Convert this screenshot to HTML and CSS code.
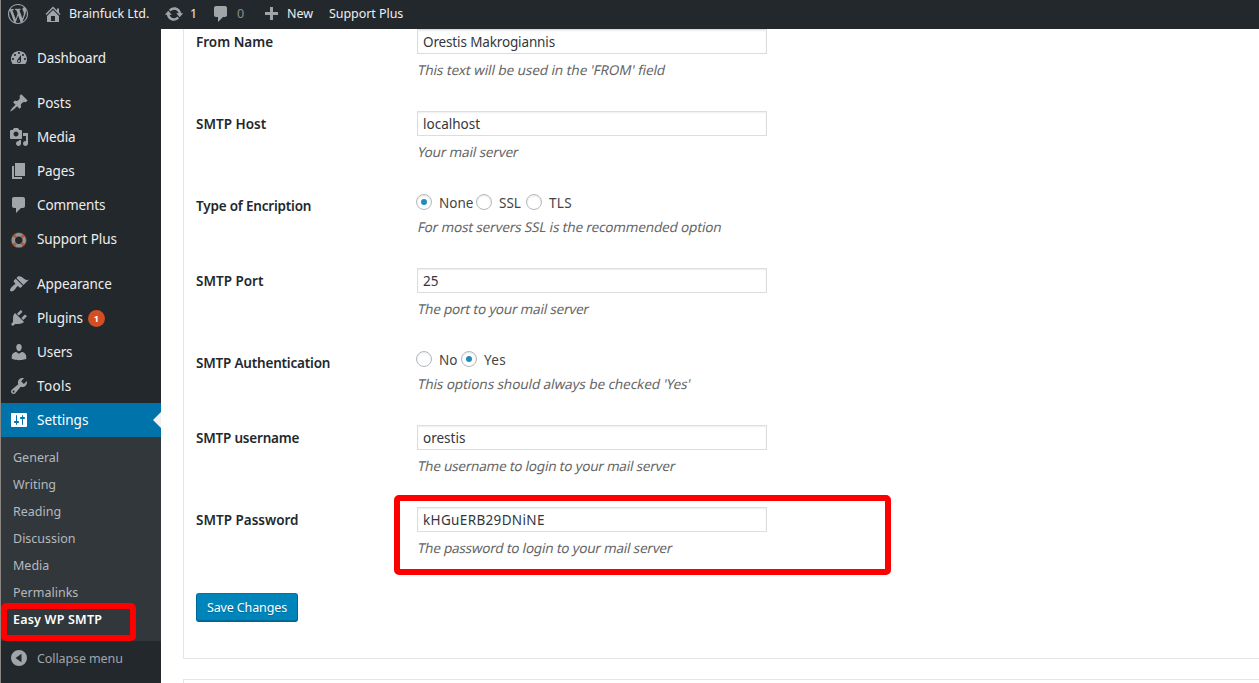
FILE: index.html
```
<!DOCTYPE html>
<html lang="en">
<head>
<meta charset="utf-8">
<title>Easy WP SMTP Settings</title>
<link rel="stylesheet" href="styles.css">
</head>
<body>
<header class="adminbar">
  <a class="bar-item bar-logo"><svg class="icon" viewBox="0 0 20 20"><path d="M20 10c0-5.51-4.49-10-10-10C4.48 0 0 4.49 0 10c0 5.52 4.48 10 10 10 5.51 0 10-4.48 10-10zM7.78 15.37L4.37 6.22c.55-.02 1.17-.08 1.17-.08.5-.06.44-1.13-.06-1.11 0 0-1.45.11-2.37.11-.18 0-.37 0-.58-.01C4.12 2.69 6.87 1.11 10 1.11c2.33 0 4.45.87 6.05 2.34-.68-.11-1.65.39-1.65 1.58 0 .74.45 1.36.9 2.1.35.61.55 1.36.55 2.46 0 1.49-1.4 5-1.4 5l-3.03-8.37c.54-.02.82-.17.82-.17.5-.05.44-1.25-.06-1.22 0 0-1.44.12-2.38.12-.87 0-2.33-.12-2.33-.12-.5-.03-.56 1.2-.06 1.22l.92.08 1.26 3.41zM17.41 10c.24-.64.74-1.87.43-4.25.7 1.29 1.05 2.71 1.05 4.25 0 3.29-1.73 6.24-4.4 7.78.97-2.59 1.94-5.2 2.92-7.78zM6.1 18.09C3.12 16.65 1.11 13.53 1.11 10c0-1.3.23-2.48.72-3.59C3.25 10.3 4.67 14.2 6.1 18.09zm4.03-6.63l2.58 6.98c-.86.29-1.76.45-2.71.45-.79 0-1.57-.11-2.29-.33.81-2.38 1.62-4.74 2.42-7.1z"/></svg></a>
  <a class="bar-item bar-site"><svg class="icon" viewBox="0 0 20 20"><path d="M16 8.5l1.53 1.53-1.06 1.06L10 4.6l-6.47 6.49-1.06-1.06L10 2.5l4 4v-2h2v4zm-6-2.46l6 5.99V18H4v-5.97zM12 17v-5H8v5h4z"/></svg><span>Brainfuck Ltd.</span></a>
  <a class="bar-item bar-updates"><svg class="icon" viewBox="0 0 20 20"><path d="M10.2 3.28c3.53 0 6.43 2.61 6.92 6h2.08l-3.5 4-3.5-4h2.32c-.45-1.97-2.21-3.45-4.32-3.45-1.45 0-2.73.71-3.54 1.78L4.95 5.66C6.23 4.2 8.11 3.28 10.2 3.28zm-.4 13.44c-3.52 0-6.43-2.61-6.92-6H.8l3.5-4c1.17 1.33 2.33 2.67 3.5 4H5.48c.45 1.97 2.21 3.45 4.32 3.45 1.45 0 2.73-.71 3.54-1.78l1.71 1.95c-1.28 1.46-3.15 2.38-5.25 2.38z"/></svg><span>1</span></a>
  <a class="bar-item bar-comments"><svg class="icon" viewBox="0 0 20 20"><path d="M5 2h9c1.1 0 2 .9 2 2v7c0 1.1-.9 2-2 2h-2l-5 5v-5H5c-1.1 0-2-.9-2-2V4c0-1.1.9-2 2-2z"/></svg><span>0</span></a>
  <a class="bar-item bar-new"><svg class="icon" viewBox="0 0 20 20"><path d="M17 8v3h-5v5H9v-5H4V8h5V3h3v5h5z"/></svg><span>New</span></a>
  <a class="bar-item bar-support"><span>Support Plus</span></a>
</header>
<div class="layout">
  <nav class="menu">
    <a class="menu-item"><svg class="icon" viewBox="0 0 20 20"><path d="M3.76 16h12.48c1.1-1.37 1.76-3.11 1.76-5 0-4.42-3.58-8-8-8s-8 3.58-8 8c0 1.89.66 3.63 1.76 5zM10 4c.55 0 1 .45 1 1s-.45 1-1 1-1-.45-1-1 .45-1 1-1zM6 6c.55 0 1 .45 1 1s-.45 1-1 1-1-.45-1-1 .45-1 1-1zm8 0c.55 0 1 .45 1 1s-.45 1-1 1-1-.45-1-1 .45-1 1-1zm-5.37 5.55L12 7v6c0 1.1-.9 2-2 2s-2-.9-2-2c0-.57.24-1.08.63-1.45zM4 10c.55 0 1 .45 1 1s-.45 1-1 1-1-.45-1-1 .45-1 1-1zm12 0c.55 0 1 .45 1 1s-.45 1-1 1-1-.45-1-1 .45-1 1-1zm-5 3c0-.55-.45-1-1-1s-1 .45-1 1 .45 1 1 1 1-.45 1-1z"/></svg><span>Dashboard</span></a>
    <div class="separator"></div>
    <a class="menu-item"><svg class="icon" viewBox="0 0 20 20"><path d="M10.44 3.02l1.82-1.82 6.36 6.35-1.83 1.82c-1.05-.68-2.48-.57-3.41.36l-.75.75c-.92.93-1.04 2.35-.35 3.41l-1.83 1.82-2.41-2.41-2.8 2.79c-.42.42-3.38 2.71-3.8 2.29s1.86-3.39 2.28-3.81l2.79-2.79L4.1 9.36l1.83-1.82c1.05.69 2.48.57 3.4-.36l.75-.75c.93-.92 1.05-2.35.36-3.41z"/></svg><span class="normal">Posts</span></a>
    <a class="menu-item"><svg class="icon" viewBox="0 0 20 20"><path d="M13 11V4c0-.55-.45-1-1-1h-1.67L9 1H5L3.67 3H2c-.55 0-1 .45-1 1v7c0 .55.45 1 1 1h10c.55 0 1-.45 1-1zM7 4.5c1.38 0 2.5 1.12 2.5 2.5S8.38 9.5 7 9.5 4.5 8.38 4.5 7 5.62 4.5 7 4.5zM14 6h5v10.5c0 1.38-1.12 2.5-2.5 2.5S14 17.88 14 16.5s1.12-2.5 2.5-2.5c.17 0 .34.02.5.05V9h-3V6zm-4 8.05V13h2v3.5c0 1.38-1.12 2.5-2.5 2.5S7 17.88 7 16.5 8.12 14 9.5 14c.17 0 .34.02.5.05z"/></svg><span class="tight">Media</span></a>
    <a class="menu-item"><svg class="icon" viewBox="0 0 20 20"><path d="M6 15V2h10v13H6zm-1 1h8v2H3V5h2v11z"/></svg><span>Pages</span></a>
    <a class="menu-item"><svg class="icon" viewBox="0 0 20 20"><path d="M5 2h9c1.1 0 2 .9 2 2v7c0 1.1-.9 2-2 2h-2l-5 5v-5H5c-1.1 0-2-.9-2-2V4c0-1.1.9-2 2-2z"/></svg><span>Comments</span></a>
    <a class="menu-item"><svg class="icon" viewBox="0 0 20 20"><g fill="none" stroke-width="3.8"><circle class="buoy-ring" cx="9.8" cy="11.2" r="5.6"/><circle class="buoy-bands" cx="9.8" cy="11.2" r="5.6" pathLength="80" stroke-dasharray="6 14" stroke-dashoffset="-7"/></g><circle class="buoy-edge" cx="9.8" cy="11.2" r="7.6"/></svg><span>Support Plus</span></a>
    <div class="separator"></div>
    <a class="menu-item"><svg class="icon" viewBox="0 0 20 20"><path d="M14.48 11.06L7.41 3.99l1.5-1.5c.5-.56 2.3-.47 3.51.32 1.21.8 1.43 1.28 2.91 2.1 1.18.64 2.45 1.26 4.45.85zm-.71.71L6.7 4.7 4.93 6.47c-.39.39-.39 1.02 0 1.41l1.06 1.06c.39.39.39 1.03 0 1.42-.6.6-1.43 1.11-2.21 1.69-.35.26-.7.53-1.01.84C1.43 14.23.4 16.08 1.4 17.07c.99 1 2.84-.03 4.18-1.36.31-.31.58-.66.85-1.02.57-.78 1.08-1.61 1.69-2.21.39-.39 1.02-.39 1.41 0l1.06 1.06c.39.39 1.02.39 1.41 0z"/></svg><span>Appearance</span></a>
    <a class="menu-item"><svg class="icon" viewBox="0 0 20 20"><path d="M13.11 4.36L9.87 7.6 8 5.73l3.24-3.24c.35-.34 1.05-.2 1.56.32.52.51.66 1.21.31 1.55zm-8 1.77l.91-1.12 9.01 9.01-1.19.84c-.71.71-2.63 1.16-3.82 1.16H6.14L4.9 17.26c-.59.59-1.54.59-2.12 0-.59-.58-.59-1.53 0-2.12l1.24-1.24v-3.88c0-1.13.4-3.19 1.09-3.89zm7.26 3.97l3.24-3.24c.34-.35 1.04-.21 1.55.31.52.51.66 1.21.31 1.55l-3.24 3.25z"/></svg><span>Plugins</span><b class="count">1</b></a>
    <a class="menu-item"><svg class="icon" viewBox="0 0 20 20"><path d="M10 9.25c-2.27 0-2.73-3.44-2.73-3.44C7 4.02 7.82 2 9.97 2c2.16 0 2.98 2.02 2.71 3.81 0 0-.41 3.44-2.68 3.44zm0 2.57L12.72 10c2.39 0 4.52 2.33 4.52 4.53v2.49s-3.65 1.13-7.24 1.13c-3.65 0-7.24-1.13-7.24-1.13v-2.49c0-2.25 1.94-4.48 4.47-4.48z"/></svg><span>Users</span></a>
    <a class="menu-item"><svg class="icon" viewBox="0 0 20 20"><path d="M16.68 9.77c-1.34 1.34-3.3 1.67-4.95.99l-5.41 6.52c-.99.99-2.59.99-3.58 0s-.99-2.59 0-3.57l6.52-5.42c-.68-1.65-.35-3.61.99-4.95 1.28-1.28 3.12-1.62 4.72-1.06l-2.89 2.89 2.82 2.82 2.86-2.87c.53 1.58.18 3.39-1.08 4.65zM3.81 16.21c.4.39 1.04.39 1.43 0 .4-.4.4-1.04 0-1.43-.39-.4-1.03-.4-1.43 0-.39.39-.39 1.03 0 1.43z"/></svg><span class="loose">Tools</span></a>
    <a class="menu-item current"><svg class="icon" viewBox="0 0 20 20"><path d="M18 16V4c0-.55-.45-1-1-1H3c-.55 0-1 .45-1 1v12c0 .55.45 1 1 1h14c.55 0 1-.45 1-1zM8 11h1c.55 0 1 .45 1 1s-.45 1-1 1H8v1.5c0 .28-.22.5-.5.5s-.5-.22-.5-.5V13H6c-.55 0-1-.45-1-1s.45-1 1-1h1V5.5c0-.28.22-.5.5-.5s.5.22.5.5V11zm5-2h-1c-.55 0-1-.45-1-1s.45-1 1-1h1V5.5c0-.28.22-.5.5-.5s.5.22.5.5V7h1c.55 0 1 .45 1 1s-.45 1-1 1h-1v5.5c0 .28-.22.5-.5.5s-.5-.22-.5-.5V9z"/></svg><span class="normal">Settings</span></a>
    <div class="submenu">
      <a>General</a><a>Writing</a><a>Reading</a><a>Discussion</a><a>Media</a><a>Permalinks</a>
      <a class="active">Easy WP SMTP</a>
      <div class="marker marker-menu"></div>
    </div>
    <a class="menu-item collapse"><svg class="icon" viewBox="0 0 20 20"><path fill-rule="evenodd" d="M10 2a8 8 0 1 1 0 16 8 8 0 0 1 0-16zM12.5 5.8v8.4L6.5 10z"/></svg><span>Collapse menu</span></a>
  </nav>
  <main class="content">
    <section class="card">
      <div class="row"><label>From Name</label><div class="field"><input type="text" class="tight" value="Orestis Makrogiannis"><p class="wide">This text will be used in the 'FROM' field</p></div></div>
      <div class="row"><label>SMTP Host</label><div class="field"><input type="text" value="localhost"><p>Your mail server</p></div></div>
      <div class="row row-radio"><label class="condensed">Type of Encription</label><div class="field"><div class="options"><i class="radio on"></i><span class="opt-none">None</span><i class="radio"></i><span class="opt-ssl">SSL</span><i class="radio"></i><span class="loose">TLS</span></div><p>For most servers SSL is the recommended option</p></div></div>
      <div class="row"><label>SMTP Port</label><div class="field"><input type="text" value="25"><p class="narrow">The port to your mail server</p></div></div>
      <div class="row row-radio"><label class="condensed">SMTP Authentication</label><div class="field"><div class="options"><i class="radio"></i><span class="opt-no">No</span><i class="radio on"></i><span class="loose">Yes</span></div><p class="wide">This options should always be checked 'Yes'</p></div></div>
      <div class="row"><label class="condensed">SMTP username</label><div class="field"><input type="text" value="orestis"><p class="narrow">The username to login to your mail server</p></div></div>
      <div class="row"><label>SMTP Password</label><div class="field"><input type="text" class="loose" value="kHGuERB29DNiNE"><p class="narrow">The password to login to your mail server</p><div class="marker marker-password"></div></div></div>
      <button class="save">Save Changes</button>
    </section>
    <section class="card card-next"></section>
  </main>
</div>
</body>
</html>
```
FILE: styles.css
```
* { box-sizing: border-box; }
body {
  margin: 0;
  height: 683px;
  overflow: hidden;
  display: flex;
  flex-direction: column;
  border-left: 1px solid #8a8580;
  background: #fff;
  font: 13.5px/20px "Noto Sans", "Open Sans", sans-serif;
  color: #444;
}
.icon { width: 20px; height: 20px; flex: none; fill: #a0a5aa; }

.adminbar {
  flex: none;
  display: flex;
  height: 29px;
  padding-left: 7px;
  background: #23282d;
  color: #eee;
  font-size: 12.5px;
}
.bar-item { display: flex; flex: none; height: 27px; align-items: center; white-space: nowrap; }
.bar-item .icon { margin-right: 6px; }
.bar-logo { width: 35px; }
.bar-site { width: 121px; letter-spacing: -.06px; }
.bar-updates { width: 47px; }
.bar-comments { width: 50px; }
.bar-comments span { opacity: .5; }
.bar-comments .icon { margin-top: 1px; }
.bar-new { width: 68px; }
.bar-new .icon { margin-top: 1px; }
.bar-support { letter-spacing: -.06px; }

.layout { flex: 1; min-height: 0; display: flex; }
.menu { width: 160px; flex: none; padding-top: 12px; background: #23282d; }
.menu-item {
  position: relative;
  display: flex;
  align-items: center;
  height: 34px;
  padding-left: 8px;
  gap: 8px;
  color: #eee;
  letter-spacing: -.1px;
  white-space: nowrap;
}
.separator { height: 11px; }
.tight { letter-spacing: -.14px; }
.loose { letter-spacing: .35px; }
.normal { letter-spacing: 0; }
.current { background: #0073aa; color: #fff; }
.current .icon { fill: #fff; }
.current::after {
  content: "";
  position: absolute;
  right: 0;
  top: 9px;
  border: 8px solid transparent;
  border-right-color: #f1f1f1;
  border-left-width: 0;
}
.count {
  width: 17px;
  height: 17px;
  margin-left: -3px;
  border-radius: 50%;
  background: #d54e21;
  color: #fff;
  font-size: 9px;
  line-height: 17px;
  text-align: center;
}
.buoy-ring { stroke: #8f9498; }
.buoy-bands { stroke: #c2562c; }
.buoy-edge { fill: none; stroke: #5d4a44; stroke-width: .6; }

.submenu {
  position: relative;
  display: flex;
  flex-direction: column;
  padding: 7px 0 8px 12px;
  background: #32373c;
  color: #b4b9be;
  font-size: 12.5px;
}
.submenu a { height: 27px; line-height: 27px; }
.submenu .active { color: #fff; font-weight: 600; letter-spacing: .2px; }
.collapse { color: #a0a5aa; font-size: 12.5px; }
.collapse span { padding-top: 1px; }

.marker { position: absolute; border: 6px solid #f00; border-radius: 5px; }
.marker-menu { left: 0; top: 166px; width: 135px; height: 38px; }
.marker-password { left: -23px; top: -12px; width: 497px; height: 80px; }

.content { flex: 1; min-width: 0; overflow: hidden; padding-left: 22px; }
.card {
  height: 645px;
  margin-top: -15px;
  padding-left: 12px;
  border: 1px solid #e5e5e5;
  border-right: 0;
  border-top: 0;
}
.card-next { height: 40px; margin-top: 20px; border-top: 1px solid #e5e5e5; }
.row { display: flex; height: 82px; padding-top: 15px; }
.row-radio { height: 75px; }
.row label {
  width: 221px;
  flex: none;
  padding-top: 3px;
  color: #23282d;
  font-weight: 600;
}
.row .condensed { letter-spacing: -.2px; }
.field { position: relative; }
.field input {
  display: block;
  width: 350px;
  height: 25px;
  padding: 0 5px;
  border: 1px solid #ddd;
  background: #fff;
  box-shadow: inset 0 1px 2px rgba(0, 0, 0, .07);
  color: #32373c;
  font: inherit;
}
.field p {
  margin: 6px 0 0;
  color: #666;
  letter-spacing: -.15px;
  white-space: nowrap;
  transform: skewX(-12deg);
  transform-origin: 0 75%;
}
.field .wide { letter-spacing: -.07px; }
.field .narrow { letter-spacing: -.21px; }
.options { display: flex; align-items: center; height: 18px; margin-left: -1px; }
.options span { position: relative; top: 1px; margin-left: 7px; }
.radio {
  width: 16px;
  height: 16px;
  display: grid;
  place-items: center;
  border: 1px solid #b4b9be;
  border-radius: 50%;
  box-shadow: inset 0 1px 2px rgba(0, 0, 0, .1);
}
.radio.on::before { content: ""; width: 6px; height: 6px; border-radius: 50%; background: #1e8cbe; }
.opt-none { width: 37px; }
.opt-ssl { width: 27px; }
.opt-no { width: 22px; }
.save {
  display: block;
  width: 102px;
  height: 29px;
  margin-top: 19px;
  padding: 0;
  border: 1px solid #006799;
  border-top-color: #0073aa;
  border-radius: 3px;
  background: #0085ba;
  box-shadow: inset 0 -1px 0 #006799;
  color: #fff;
  font: 12.5px/26px "Noto Sans", "Open Sans", sans-serif;
  letter-spacing: -.12px;
  text-shadow: 0 1px 1px #006799;
}
```
